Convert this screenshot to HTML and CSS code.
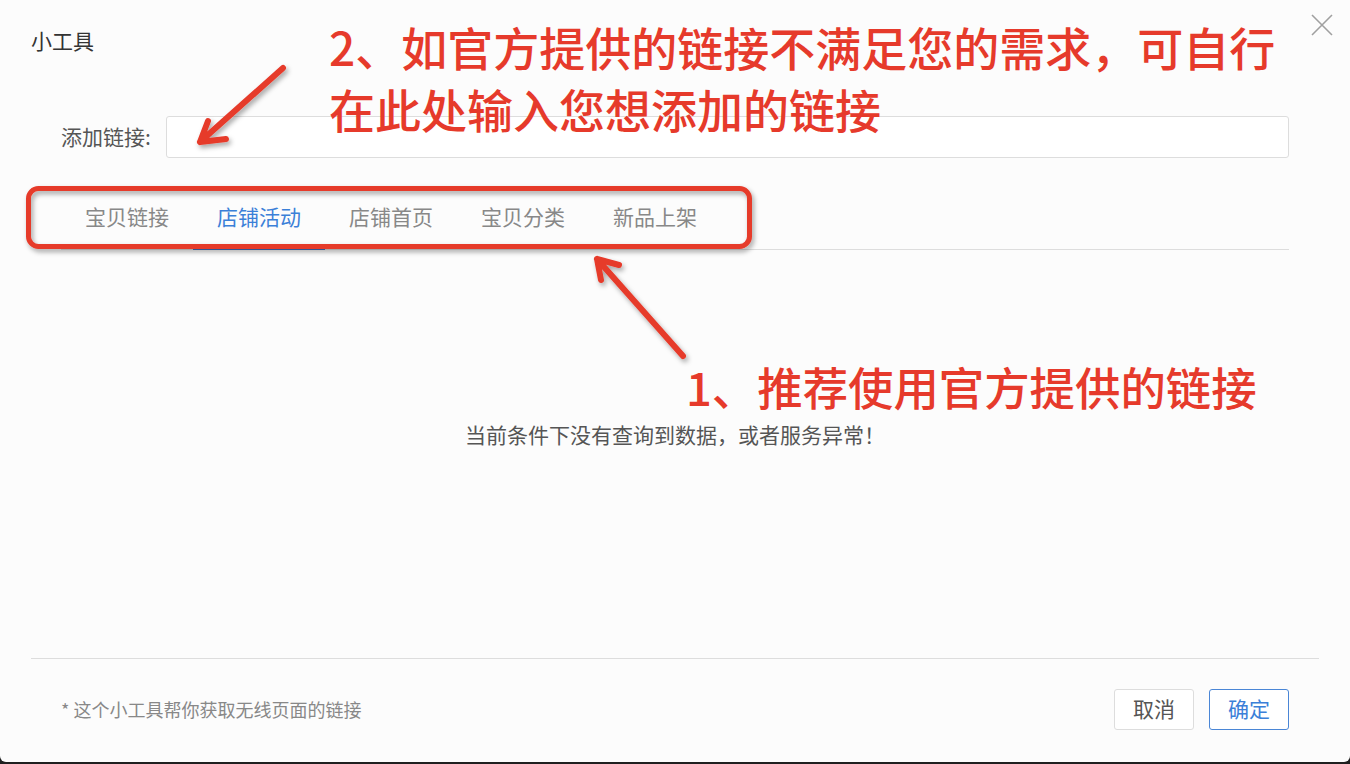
FILE: index.html
```html
<!DOCTYPE html>
<html lang="zh-CN">
<head>
    <meta charset="UTF-8">
    <meta name="viewport" content="width=device-width, initial-scale=1.0">
    <title>小工具</title>
    <link rel="stylesheet" href="styles.css">
</head>

<body>
    <div class="modal">
        <div class="modal-header">
            <h3>小工具</h3>
            <button class="close" type="button" aria-label="关闭">
                <svg width="22" height="22" viewBox="0 0 22 22">
                    <path d="M1 1 L21 21 M21 1 L1 21" stroke="#a0a0a0" stroke-width="1.6" fill="none"/>
                </svg>
            </button>
        </div>

        <div class="modal-body">
            <div class="form-row">
                <label for="link">添加链接:</label>
                <input type="text" id="link">
            </div>

            <ul class="tabs">
                <li><a href="#">宝贝链接</a></li>
                <li class="active"><a href="#">店铺活动</a></li>
                <li><a href="#">店铺首页</a></li>
                <li><a href="#">宝贝分类</a></li>
                <li><a href="#">新品上架</a></li>
            </ul>

            <div class="empty">当前条件下没有查询到数据，或者服务异常！</div>
        </div>

        <div class="modal-footer">
            <p>* 这个小工具帮你获取无线页面的链接</p>
            <div class="btns">
                <button type="button" class="btn">取消</button>
                <button type="button" class="btn btn-primary">确定</button>
            </div>
        </div>

        <!-- anotaciones en rojo sobre la captura -->
        <p class="note note-2">2、如官方提供的链接不满足您的需求，可自行<br>在此处输入您想添加的链接</p>
        <p class="note note-1">1、推荐使用官方提供的链接</p>

        <svg class="marks" width="1350" height="764" viewBox="0 0 1350 764">
            <defs>
                <filter id="sombra" x="-20%" y="-20%" width="140%" height="140%">
                    <feDropShadow dx="2" dy="3" stdDeviation="2.5" flood-color="#000" flood-opacity="0.35"/>
                </filter>
            </defs>
            <g fill="none" stroke="#e63a2b" stroke-linecap="round" stroke-linejoin="round" filter="url(#sombra)">
                <rect x="28.5" y="188.5" width="721" height="58" rx="10" stroke-width="5"/>
                <path d="M283 68 L200 142 M200 142 L208 121 M200 142 L226 139" stroke-width="6"/>
                <path d="M683 356 L597 259 M597 259 L601 280 M597 259 L619 265" stroke-width="6"/>
            </g>
        </svg>
    </div>
</body>

</html>
```

FILE: styles.css
```css
body {
    margin: 0;
    background-color: #1f1f1f;
    font-family: "Noto Sans CJK SC", "Noto Sans", sans-serif;
    height: 764px;
    overflow: hidden;
}

.modal {
    position: relative;
    width: 1350px;
    height: 762px;
    background-color: #fcfcfc;
    border-radius: 0 0 6px 6px;
    overflow: hidden;
}

.modal-header {
    display: flex;
    justify-content: space-between;
    padding: 28px 31px 0 31px;
}

.modal-header h3 {
    margin: 0 0 2px 0;
    font-size: 21px;
    line-height: 24px;
    font-weight: normal;
    color: #333;
}

.close {
    margin: -14px -14px 0 0;
    padding: 0;
    border: none;
    background: none;
    width: 22px;
    height: 22px;
    cursor: pointer;
}

.modal-body {
    padding: 0 61px;
}

.form-row {
    display: flex;
    align-items: center;
    margin-top: 62px;
}

.form-row label {
    width: 105px;
    padding-bottom: 3px;
    font-size: 21px;
    color: #555;
}

.form-row input {
    flex: 1;
    height: 42px;
    box-sizing: border-box;
    border: 1px solid #ddd;
    border-radius: 3px;
    background-color: #fff;
}

.tabs {
    display: flex;
    list-style: none;
    margin: 29px 0 0 0;
    padding: 0;
    border-bottom: 1px solid #ddd;
}

.tabs li {
    width: 132px;
    height: 63px;
    margin-bottom: -1px;
    box-sizing: border-box;
    text-align: center;
}

.tabs a {
    display: block;
    padding-top: 17px;
    line-height: 24px;
    font-size: 21px;
    color: #888;
    text-decoration: none;
}

.tabs .active {
    border-bottom: 2px solid #3f6fc2;
}

.tabs .active a {
    color: #3b80d8;
}

.empty {
    height: 408px;
    box-sizing: border-box;
    padding-top: 172px;
    text-align: center;
    font-size: 21px;
    line-height: 24px;
    color: #555;
}

.modal-footer {
    display: flex;
    justify-content: space-between;
    align-items: center;
    margin: 0 31px;
    padding: 30px 30px 0 30px;
    border-top: 1px solid #ddd;
}

.modal-footer p {
    margin: 0 0 2px 0;
    font-size: 18px;
    color: #888;
}

.btns {
    display: flex;
    gap: 15px;
}

.btn {
    width: 80px;
    height: 41px;
    padding: 0 0 4px 0;
    font-family: inherit;
    font-size: 21px;
    color: #555;
    background-color: #fff;
    border: 1px solid #ddd;
    border-radius: 3px;
    cursor: pointer;
}

.btn-primary {
    color: #3b80d8;
    border-color: #4a86d6;
}

.note {
    position: absolute;
    margin: 0;
    color: #e63a2b;
    font-weight: 500;
    white-space: nowrap;
}

.note-2 {
    left: 329px;
    top: 15px;
    font-size: 46px;
    line-height: 62px;
}

.note-1 {
    left: 686px;
    top: 355px;
    font-size: 45.4px;
    line-height: 62px;
}

.marks {
    position: absolute;
    left: 0;
    top: 0;
    pointer-events: none;
}
```
